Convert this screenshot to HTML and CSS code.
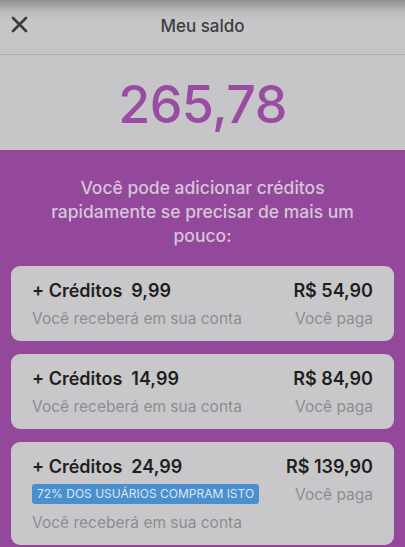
FILE: index.html
```html
<!DOCTYPE html>
<html>
  <head>
    <title>Meu saldo</title>
    <link rel="stylesheet" href="styles.css">
  </head>
  <body>
    <div class="header">
      <button class="close" type="button">
        <svg width="17" height="17" viewBox="0 0 17 17">
          <path d="M2 2 L15 15 M15 2 L2 15" stroke="#3b3b3d" stroke-width="2.6" stroke-linecap="round" fill="none"/>
        </svg>
      </button>
      <div class="title">Meu saldo</div>
    </div>
    <div class="balance">265,78</div>

    <div class="offers">
      <p class="intro">Você pode adicionar créditos rapidamente se precisar de mais um pouco:</p>

      <div class="card">
        <div class="row">
          <span class="credits">+ Créditos&nbsp; 9,99</span>
          <span class="price">R$ 54,90</span>
        </div>
        <div class="row">
          <span class="hint">Você receberá em sua conta</span>
          <span class="hint">Você paga</span>
        </div>
      </div>

      <div class="card">
        <div class="row">
          <span class="credits">+ Créditos&nbsp; 14,99</span>
          <span class="price">R$ 84,90</span>
        </div>
        <div class="row">
          <span class="hint">Você receberá em sua conta</span>
          <span class="hint">Você paga</span>
        </div>
      </div>

      <div class="card">
        <div class="row">
          <span class="credits">+ Créditos&nbsp; 24,99</span>
          <span class="price">R$ 139,90</span>
        </div>
        <div class="row">
          <span class="badge">72% dos usuários compram isto</span>
          <span class="hint">Você paga</span>
        </div>
        <div class="row">
          <span class="hint">Você receberá em sua conta</span>
        </div>
      </div>
    </div>
  </body>
</html>
```

FILE: styles.css
```css
body {
  margin: 0;
  font-family: Inter, "Noto Sans", sans-serif;
  background-color: #c6c6c9;
  overflow: hidden;
}

.header {
  height: 54px;
  display: flex;
  align-items: center;
  justify-content: center;
  position: relative;
  border-bottom: 1px solid #adadb0;
  background: linear-gradient(#8f8f92 0px, #bdbdc0 12px, #c6c6c9 22px);
}

.close {
  position: absolute;
  left: 11px;
  top: 16px;
  background: none;
  border: none;
  padding: 0;
}

.title {
  font-size: 17px;
  font-weight: 500;
  color: #3d3d3f;
  padding-bottom: 3px;
}

.balance {
  height: 95px;
  padding-top: 4px;
  box-sizing: border-box;
  display: flex;
  align-items: center;
  justify-content: center;
  font-size: 52px;
  font-weight: 500;
  color: #9a4ca3;
  letter-spacing: -0.6px;
}

.offers {
  background-color: #94489c;
  padding: 26px 11px 2px;
  display: flex;
  flex-direction: column;
  gap: 13px;
}

.intro {
  margin: 0 28px 5px;
  text-align: center;
  font-size: 17.5px;
  line-height: 24px;
  font-weight: 500;
  color: #d4c6d6;
}

.card {
  background-color: #c8c8cb;
  border-radius: 9px;
  padding: 10px 21px 9px;
  display: flex;
  flex-direction: column;
}

.row {
  height: 28px;
  display: flex;
  justify-content: space-between;
  align-items: center;
}

.credits, .price {
  font-size: 18px;
  font-weight: 600;
  color: #1f1f21;
}

.hint {
  font-size: 15.5px;
  color: #8d8d91;
}

.badge {
  background-color: #4a8fcf;
  color: #dde7f1;
  font-size: 12px;
  text-transform: uppercase;
  line-height: 14px;
  padding: 3px 5px;
  border-radius: 3px;
}
```
